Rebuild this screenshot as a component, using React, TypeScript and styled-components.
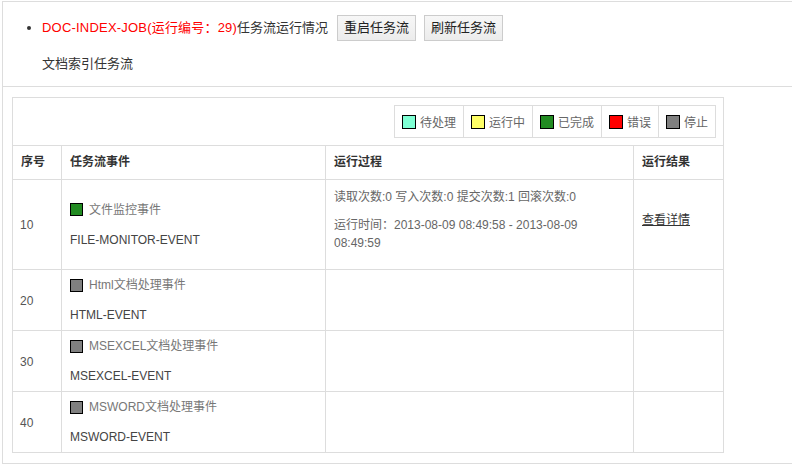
import React from "react";
import styled, { createGlobalStyle } from "styled-components";

const GlobalStyle = createGlobalStyle`
  html, body {
    margin: 0;
    padding: 0;
    background: #fff;
    overflow: hidden;
  }
  body {
    font-family: "Liberation Sans", "Noto Sans CJK SC", sans-serif;
    font-size: 12px;
    color: #333;
  }
`;

const Panel = styled.div`
  margin: 1px 0 0 2px;
  width: 800px;
  border: 1px solid #ddd;
`;

const Header = styled.div`
  padding: 13px 0 13px 39px;
  border-bottom: 1px solid #ddd;
`;

const TitleList = styled.ul`
  margin: 0;
  padding: 0;
  list-style: disc outside;
`;

const TitleItem = styled.li`
  font-size: 13px;
  line-height: 26px;
  color: #333;
`;

const JobName = styled.span`
  color: #f00;
  letter-spacing: 0.2px;
`;

const ActionButton = styled.button`
  display: inline-block;
  vertical-align: top;
  height: 26px;
  margin-left: 9px;
  padding: 0 6px;
  border: 1px solid #ccc;
  background: linear-gradient(#f7f7f7, #ececec);
  font-family: inherit;
  font-size: 13px;
  line-height: 24px;
  color: #222;
  border-radius: 0;
  & + & {
    margin-left: 8px;
  }
`;

const Subtitle = styled.p`
  margin: 14px 0 0;
  font-size: 13px;
  line-height: 18px;
  color: #333;
`;

const Body = styled.div`
  padding: 10px 9px;
`;

const Table = styled.table`
  width: 711px;
  table-layout: fixed;
  border-collapse: collapse;
  border: 1px solid #ddd;
`;

const LegendCell = styled.td`
  padding: 7px 7px;
  text-align: right;
  border: 1px solid #ddd;
`;

const Legend = styled.div`
  display: inline-flex;
  height: 33px;
  border: 1px solid #ddd;
  box-sizing: border-box;
  vertical-align: top;
`;

const LegendItem = styled.div`
  display: flex;
  align-items: center;
  gap: 4px;
  padding: 0 7px;
  color: #666;
  font-size: 12px;
  & + & {
    border-left: 1px solid #ddd;
  }
`;

const Swatch = styled.span<{ $color: string; $size?: number }>`
  display: inline-block;
  flex: none;
  width: ${(p) => p.$size ?? 14}px;
  height: ${(p) => p.$size ?? 14}px;
  box-sizing: border-box;
  border: 1px solid #000;
  background: ${(p) => p.$color};
`;

const Th = styled.th`
  padding: 8px;
  text-align: left;
  font-weight: bold;
  font-size: 12px;
  line-height: 17px;
  color: #333;
  border: 1px solid #ddd;
`;

const Td = styled.td`
  padding: 8px 8px 7px;
  vertical-align: middle;
  font-size: 12px;
  color: #666;
  border: 1px solid #ddd;
`;

const NumCell = styled(Td)`
  padding-left: 7px;
  color: #555;
`;

const EventCell = styled(Td)`
  padding: 5px 8px;
`;

const EventName = styled.div`
  line-height: 20px;
  color: #777;
  display: flex;
  align-items: center;
  gap: 6px;
`;

const EventCode = styled.div`
  margin-top: 10px;
  line-height: 20px;
  color: #444;
`;

const Para = styled.p`
  margin: 0 0 10px;
  line-height: 18px;
`;

const DetailLink = styled.a`
  color: #333;
  text-decoration: underline;
  cursor: pointer;
`;

const statuses = [
  { label: "待处理", color: "#7fffd4" },
  { label: "运行中", color: "#ffff66" },
  { label: "已完成", color: "#228b22" },
  { label: "错误", color: "#ff0000" },
  { label: "停止", color: "#808080" },
];

const events = [
  { no: 10, name: "文件监控事件", code: "FILE-MONITOR-EVENT", color: "#228b22", done: true },
  { no: 20, name: "Html文档处理事件", code: "HTML-EVENT", color: "#808080", done: false },
  { no: 30, name: "MSEXCEL文档处理事件", code: "MSEXCEL-EVENT", color: "#808080", done: false },
  { no: 40, name: "MSWORD文档处理事件", code: "MSWORD-EVENT", color: "#808080", done: false },
];

export default function App() {
  return (
    <>
      <GlobalStyle />
      <Panel>
        <Header>
          <TitleList>
            <TitleItem>
              <JobName>DOC-INDEX-JOB(运行编号：29)</JobName>任务流运行情况
              <ActionButton>重启任务流</ActionButton>
              <ActionButton>刷新任务流</ActionButton>
            </TitleItem>
          </TitleList>
          <Subtitle>文档索引任务流</Subtitle>
        </Header>
        <Body>
          <Table>
            <colgroup>
              <col style={{ width: 49 }} />
              <col style={{ width: 264 }} />
              <col style={{ width: 308 }} />
              <col style={{ width: 90 }} />
            </colgroup>
            <tbody>
              <tr>
                <LegendCell colSpan={4}>
                  <Legend>
                    {statuses.map((s) => (
                      <LegendItem key={s.label}>
                        <Swatch $color={s.color} />
                        {s.label}
                      </LegendItem>
                    ))}
                  </Legend>
                </LegendCell>
              </tr>
              <tr>
                <Th>序号</Th>
                <Th>任务流事件</Th>
                <Th>运行过程</Th>
                <Th>运行结果</Th>
              </tr>
              {events.map((e) => (
                <tr key={e.no}>
                  <NumCell>{e.no}</NumCell>
                  <EventCell>
                    <EventName>
                      <Swatch $color={e.color} $size={13} />
                      {e.name}
                    </EventName>
                    <EventCode>{e.code}</EventCode>
                  </EventCell>
                  <Td>
                    {e.done && (
                      <>
                        <Para>读取次数:0 写入次数:0 提交次数:1 回滚次数:0</Para>
                        <Para>运行时间：2013-08-09 08:49:58 - 2013-08-09 08:49:59</Para>
                      </>
                    )}
                  </Td>
                  <Td>
                    {e.done && (
                      <Para>
                        <DetailLink>查看详情</DetailLink>
                      </Para>
                    )}
                  </Td>
                </tr>
              ))}
            </tbody>
          </Table>
        </Body>
      </Panel>
    </>
  );
}
